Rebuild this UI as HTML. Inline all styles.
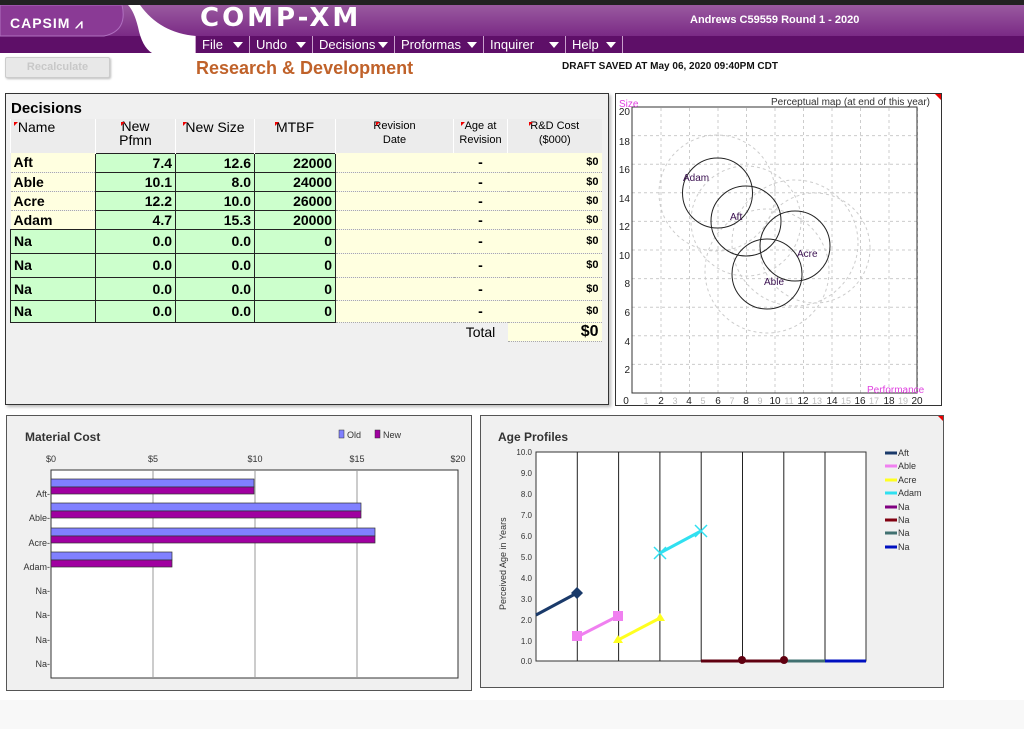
<!DOCTYPE html>
<html><head><meta charset="utf-8"><style>
*{margin:0;padding:0;box-sizing:border-box}
body{width:1024px;height:729px;background:#fff;font-family:"Liberation Sans",sans-serif;position:relative;overflow:hidden}
.abs{position:absolute}
.menu{position:absolute;top:36px;height:17px;color:#fff;font-size:13px;line-height:17px;border-left:1px solid #c9a0cc;padding-left:6px}
.menu:after{content:"";position:absolute;right:6px;top:6px;border-left:5px solid transparent;border-right:5px solid transparent;border-top:6px solid #fff}
table{border-collapse:collapse;font-family:"Liberation Sans",sans-serif;table-layout:fixed}
td{font-size:14px;font-weight:bold;padding:0 3px;white-space:nowrap;overflow:hidden}
.hd td{font-weight:normal;text-align:center;vertical-align:top;border-left:1px solid #fff;background:#ececec;font-size:14px}
.y{background:#ffffe0;border-bottom:1px dotted #aaa}
.g{background:#ccffcc;border:1px solid #222;text-align:right}
.r{text-align:right}
.c{text-align:center}
.tri{position:absolute;width:0;height:0;border-top:4px solid #e00;border-right:4px solid transparent}
</style></head><body>
<div class="abs" style="left:0;top:0;width:1024px;height:5px;background:#222"></div>
<div class="abs" style="left:0;top:5px;width:1024px;height:31px;background:linear-gradient(#9a5aa0,#7a2a85)"></div>
<div class="abs" style="left:0;top:36px;width:1024px;height:17px;background:#5e0f68"></div>
<svg class="abs" style="left:0;top:5px" width="240" height="50">
<path d="M0 0H122 Q128 26 104 31 H0Z" fill="#8a3a95" stroke="#b070c0" stroke-width="1"/>
<path d="M128 0 H140 Q160 28 196 31 V48 H152 Q142 42 138 22 Q134 6 128 0Z" fill="#fff"/>
</svg>
<div class="abs" style="left:10px;top:15px;color:#fff;font-weight:bold;font-size:14px;letter-spacing:1px">CAPSIM <span style="font-size:13px">⩘</span></div>
<div class="abs" style="left:200px;top:4px;color:#fff;font-weight:bold;font-size:26px;letter-spacing:3px;font-family:'DejaVu Sans',sans-serif;line-height:28px">COMP-XM</div>
<div class="menu" style="left:195px;width:54px">File</div>
<div class="menu" style="left:249px;width:63px">Undo</div>
<div class="menu" style="left:312px;width:82px">Decisions</div>
<div class="menu" style="left:394px;width:89px">Proformas</div>
<div class="menu" style="left:483px;width:82px">Inquirer</div>
<div class="menu" style="left:565px;width:58px;border-right:1px solid #c9a0cc">Help</div>
<div class="abs" style="left:690px;top:14px;color:#fff;font-weight:bold;font-size:11px">Andrews C59559 Round 1 - 2020</div>
<div class="abs" style="left:5px;top:57px;width:105px;height:21px;background:#e8e8e8;border:1px solid #ccc;border-radius:2px;color:#c8c8c8;font-size:11px;font-weight:bold;text-align:center;line-height:19px;box-shadow:1px 1px 2px #bbb">Recalculate</div>
<div class="abs" style="left:196px;top:58px;color:#c0622a;font-weight:bold;font-size:18px">Research &amp; Development</div>
<div class="abs" style="left:562px;top:61px;color:#111;font-weight:bold;font-size:10px">DRAFT SAVED AT May 06, 2020 09:40PM CDT</div>

<!-- Decisions -->
<div class="abs" style="left:5px;top:93px;width:604px;height:312px;background:#f0f0f0;border:1px solid #333;box-shadow:2px 2px 3px #bbb"></div>
<div class="abs" style="left:11px;top:100px;font-weight:bold;font-size:15px">Decisions</div>
<table class="abs" style="left:10px;top:119px;width:591px">
<colgroup><col style="width:85px"><col style="width:80px"><col style="width:79px"><col style="width:81px"><col style="width:118px"><col style="width:54px"><col style="width:94px"></colgroup>
<tr class="hd" style="height:34px"><td style="text-align:left">&nbsp;Name</td><td style="line-height:14px">New<br>Pfmn</td><td>New Size</td><td>MTBF</td><td style="font-size:11px;line-height:14px">Revision<br>Date</td><td style="font-size:11px;line-height:14px">Age at<br>Revision</td><td style="font-size:11px;line-height:14px">R&amp;D Cost<br>($000)</td></tr>
<tr style="height:19px"><td class="y">Aft</td><td class="g">7.4</td><td class="g">12.6</td><td class="g">22000</td><td class="y"></td><td class="y c">-</td><td class="y r" style="font-size:11px">$0</td></tr>
<tr style="height:19px"><td class="y">Able</td><td class="g">10.1</td><td class="g">8.0</td><td class="g">24000</td><td class="y"></td><td class="y c">-</td><td class="y r" style="font-size:11px">$0</td></tr>
<tr style="height:19px"><td class="y">Acre</td><td class="g">12.2</td><td class="g">10.0</td><td class="g">26000</td><td class="y"></td><td class="y c">-</td><td class="y r" style="font-size:11px">$0</td></tr>
<tr style="height:19px"><td class="y">Adam</td><td class="g">4.7</td><td class="g">15.3</td><td class="g">20000</td><td class="y"></td><td class="y c">-</td><td class="y r" style="font-size:11px">$0</td></tr>
<tr style="height:24px"><td class="g" style="text-align:left">Na</td><td class="g">0.0</td><td class="g">0.0</td><td class="g">0</td><td class="y"></td><td class="y c">-</td><td class="y r" style="font-size:11px">$0</td></tr>
<tr style="height:24px"><td class="g" style="text-align:left">Na</td><td class="g">0.0</td><td class="g">0.0</td><td class="g">0</td><td class="y"></td><td class="y c">-</td><td class="y r" style="font-size:11px">$0</td></tr>
<tr style="height:23px"><td class="g" style="text-align:left">Na</td><td class="g">0.0</td><td class="g">0.0</td><td class="g">0</td><td class="y"></td><td class="y c">-</td><td class="y r" style="font-size:11px">$0</td></tr>
<tr style="height:22px"><td class="g" style="text-align:left">Na</td><td class="g">0.0</td><td class="g">0.0</td><td class="g">0</td><td class="y"></td><td class="y c">-</td><td class="y r" style="font-size:11px">$0</td></tr>
<tr style="height:19px"><td></td><td></td><td></td><td></td><td></td><td class="c" style="font-weight:normal">Total</td><td class="y r" style="font-size:16px">$0</td></tr>
</table>
<div class="tri" style="left:14px;top:122px"></div><div class="tri" style="left:121px;top:122px"></div><div class="tri" style="left:183px;top:122px"></div><div class="tri" style="left:275px;top:122px"></div><div class="tri" style="left:376px;top:122px"></div><div class="tri" style="left:461px;top:122px"></div><div class="tri" style="left:529px;top:122px"></div>

<!-- Perceptual map -->
<svg class="abs" style="left:615px;top:93px" width="332" height="316" font-family="Liberation Sans,sans-serif">
<rect x="0.5" y="0.5" width="326" height="312" fill="#fff" stroke="#333"/>
<path d="M320 1h6v6z" fill="#e00"/>
<g stroke="#ccc" stroke-dasharray="3,3">
<path d="M46 15V300M74.5 15V300M103 15V300M131.5 15V300M160 15V300M188.5 15V300M217 15V300M245.5 15V300M274 15V300M302.5 15V300"/>
<path d="M17 271.4H302M17 242.8H302M17 214.2H302M17 185.6H302M17 157H302M17 128.4H302M17 99.8H302M17 71.2H302M17 42.6H302"/>
</g>
<g fill="none" stroke="#ccc" stroke-dasharray="3,3">
<circle cx="102" cy="100" r="58"/><circle cx="131" cy="128" r="55"/><circle cx="180" cy="150" r="63"/><circle cx="152" cy="178" r="62"/><circle cx="200" cy="155" r="55"/>
</g>
<rect x="17" y="14" width="285" height="286" fill="none" stroke="#333"/>
<g fill="none" stroke="#222">
<circle cx="102.5" cy="100" r="35"/><circle cx="131" cy="128" r="35"/><circle cx="180" cy="153" r="35"/><circle cx="152" cy="181" r="35"/>
</g>
<g font-size="10" fill="#3a1050"><text x="68" y="88">Adam</text><text x="115" y="127">Aft</text><text x="182" y="164">Acre</text><text x="149" y="192">Able</text></g>
<text x="4" y="14" font-size="10" fill="#e040e0">Size</text>
<text x="315" y="12" font-size="10" fill="#333" text-anchor="end">Perceptual map (at end of this year)</text>
<text x="252" y="300" font-size="10" fill="#e040e0">Performance</text>
<g font-size="10" fill="#222" text-anchor="end"><text x="15" y="22">20</text><text x="15" y="52">18</text><text x="15" y="80">16</text><text x="15" y="109">14</text><text x="15" y="137">12</text><text x="15" y="166">10</text><text x="15" y="194">8</text><text x="15" y="223">6</text><text x="15" y="252">4</text><text x="15" y="280">2</text></g>
<g font-size="10" fill="#222" text-anchor="middle"><text x="11" y="311">0</text><text x="46" y="311">2</text><text x="74" y="311">4</text><text x="103" y="311">6</text><text x="131" y="311">8</text><text x="160" y="311">10</text><text x="188" y="311">12</text><text x="217" y="311">14</text><text x="245" y="311">16</text><text x="274" y="311">18</text><text x="302" y="311">20</text></g>
<g font-size="9" fill="#bbb" text-anchor="middle"><text x="31" y="311">1</text><text x="60" y="311">3</text><text x="88" y="311">5</text><text x="117" y="311">7</text><text x="145" y="311">9</text><text x="174" y="311">11</text><text x="202" y="311">13</text><text x="231" y="311">15</text><text x="259" y="311">17</text><text x="288" y="311">19</text></g>
</svg>

<!-- Material cost -->
<svg class="abs" style="left:6px;top:415px" width="472" height="282" font-family="Liberation Sans,sans-serif">
<rect x="0.5" y="0.5" width="465" height="275" fill="#f0f0f0" stroke="#555"/>
<text x="19" y="26" font-size="12" font-weight="bold" fill="#333">Material Cost</text>
<rect x="333" y="15" width="5" height="8" fill="#8080ff" stroke="#333" stroke-width=".5"/><text x="341" y="23" font-size="9" fill="#333">Old</text>
<rect x="369" y="15" width="5" height="8" fill="#a000a0" stroke="#333" stroke-width=".5"/><text x="377" y="23" font-size="9" fill="#333">New</text>
<g font-size="9" fill="#333" text-anchor="middle"><text x="45" y="47">$0</text><text x="147" y="47">$5</text><text x="249" y="47">$10</text><text x="351" y="47">$15</text><text x="452" y="47">$20</text></g>
<rect x="45" y="55" width="407" height="208" fill="#fff" stroke="#333"/>
<path d="M147 55V263M249 55V263M351 55V263" stroke="#999"/>
<g stroke="#333" stroke-width=".7">
<rect x="45" y="64" width="203" height="8" fill="#8080ff"/><rect x="45" y="72" width="203" height="7" fill="#a000a0"/>
<rect x="45" y="88" width="310" height="8" fill="#8080ff"/><rect x="45" y="96" width="310" height="7" fill="#a000a0"/>
<rect x="45" y="113" width="324" height="8" fill="#8080ff"/><rect x="45" y="121" width="324" height="7" fill="#a000a0"/>
<rect x="45" y="137" width="121" height="8" fill="#8080ff"/><rect x="45" y="145" width="121" height="7" fill="#a000a0"/>
</g>
<g font-size="9" fill="#333" text-anchor="end"><text x="44" y="82">Aft-</text><text x="44" y="106">Able-</text><text x="44" y="131">Acre-</text><text x="44" y="155">Adam-</text><text x="44" y="179">Na-</text><text x="44" y="203">Na-</text><text x="44" y="228">Na-</text><text x="44" y="252">Na-</text></g>
</svg>

<!-- Age profiles -->
<svg class="abs" style="left:480px;top:415px" width="470" height="282" font-family="Liberation Sans,sans-serif">
<rect x="0.5" y="0.5" width="463" height="272" fill="#f0f0f0" stroke="#555"/>
<path d="M458 1h5v5z" fill="#e00"/>
<text x="18" y="26" font-size="12" font-weight="bold" fill="#333">Age Profiles</text>
<rect x="56" y="37" width="330" height="209" fill="#fff" stroke="#333"/>
<path d="M97.3 37V246M138.6 37V246M179.9 37V246M221.2 37V246M262.5 37V246M303.8 37V246M345 37V246" stroke="#222"/>
<g font-size="8" fill="#333" text-anchor="end"><text x="52" y="40">10.0</text><text x="52" y="61">9.0</text><text x="52" y="82">8.0</text><text x="52" y="103">7.0</text><text x="52" y="124">6.0</text><text x="52" y="145">5.0</text><text x="52" y="166">4.0</text><text x="52" y="187">3.0</text><text x="52" y="208">2.0</text><text x="52" y="229">1.0</text><text x="52" y="249">0.0</text></g>
<text transform="translate(26,195) rotate(-90)" font-size="9" fill="#333">Perceived Age in Years</text>
<g stroke-width="3" fill="none">
<path d="M56 200L97 178" stroke="#1a3a6a"/><path d="M97 222L138 201" stroke="#f080f0"/><path d="M138 225L180 203" stroke="#ffff20"/><path d="M180 138L221 116" stroke="#30e0f0"/>
<path d="M221 246H304" stroke="#600010"/><path d="M304 246H345" stroke="#407070"/><path d="M345 246H386" stroke="#0010c0"/>
</g>
<path d="M97 172l6 6-6 6-6-6z" fill="#1a3a6a"/><rect x="92" y="216" width="10" height="10" fill="#f080f0"/><rect x="133" y="196" width="10" height="10" fill="#f080f0"/>
<path d="M138 220l5 8h-10zM180 198l5 8h-10z" fill="#ffff20"/>
<path d="M174 132l12 12M186 132l-12 12M215 110l12 12M227 110l-12 12" stroke="#30e0f0" stroke-width="1.5"/>
<circle cx="262" cy="245" r="4" fill="#600010"/><circle cx="304" cy="245" r="4" fill="#600010"/>
<g font-size="9" fill="#333">
<path d="M405 38h12" stroke="#1a3a6a" stroke-width="3"/><text x="418" y="41">Aft</text>
<path d="M405 51h12" stroke="#f080f0" stroke-width="3"/><text x="418" y="54">Able</text>
<path d="M405 65h12" stroke="#ffff20" stroke-width="3"/><text x="418" y="68">Acre</text>
<path d="M405 78h12" stroke="#30e0f0" stroke-width="3"/><text x="418" y="81">Adam</text>
<path d="M405 92h12" stroke="#800080" stroke-width="3"/><text x="418" y="95">Na</text>
<path d="M405 105h12" stroke="#800010" stroke-width="3"/><text x="418" y="108">Na</text>
<path d="M405 118h12" stroke="#407070" stroke-width="3"/><text x="418" y="121">Na</text>
<path d="M405 132h12" stroke="#0010c0" stroke-width="3"/><text x="418" y="135">Na</text>
</g>
</svg>
<div class="abs" style="left:0;top:700px;width:1024px;height:29px;background:#f8f8f8"></div>
</body></html>
